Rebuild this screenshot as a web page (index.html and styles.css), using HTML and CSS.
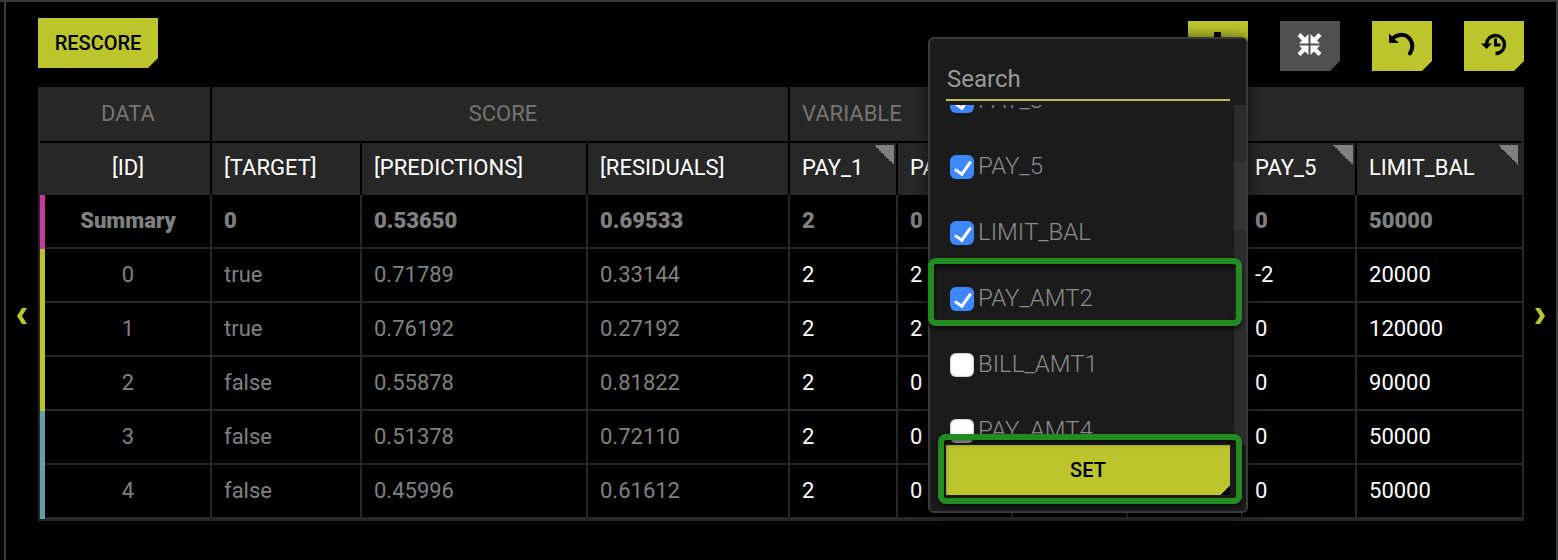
FILE: index.html
```html
<!DOCTYPE html>
<html lang="en">
<head>
<meta charset="utf-8">
<title>Rescore</title>
<link rel="stylesheet" href="styles.css">
</head>
<body>
<main class="panel">
  <header class="toolbar">
    <button class="btn btn-text" type="button">RESCORE</button>
    <div class="actions">
      <div class="picker">
        <button class="btn btn-icon" type="button" aria-label="Add variable">
          <svg width="28" height="28" viewBox="0 0 28 28"><path d="M10 0h7v10h9v7h-9v10h-7V17H1v-7h9z"/></svg>
        </button>
        <form class="popup">
          <input class="search" type="text" placeholder="Search" aria-label="Search">
          <div class="scroll">
            <ul class="options">
              <li><label class="option"><input type="checkbox" checked><span>PAY_3</span></label></li>
              <li><label class="option"><input type="checkbox" checked><span>PAY_5</span></label></li>
              <li><label class="option"><input type="checkbox" checked><span>LIMIT_BAL</span></label></li>
              <li><label class="option"><input type="checkbox" checked><span>PAY_AMT2</span></label></li>
              <li><label class="option"><input type="checkbox"><span>BILL_AMT1</span></label></li>
              <li><label class="option"><input type="checkbox"><span>PAY_AMT4</span></label></li>
            </ul>
            <div class="track"><div class="thumb"></div></div>
          </div>
          <button class="btn btn-set" type="button">SET</button>
          <div class="mark mark-option"></div>
          <div class="mark mark-set"></div>
        </form>
      </div>
      <button class="btn btn-icon btn-muted" type="button" aria-label="Collapse">
        <svg width="28" height="28" viewBox="0 0 28 28"><g fill="#fff"><path d="M12.500 11.500H3l3-3L1.500 4 4.500 1 9 5.500l3.500-3.500z"/><path d="M14.500 11.500H24l-3-3L25.500 4l-3-3L18 5.500 14.500 2z"/><path d="M12.500 13.500H3l3 3L1.500 21l3 3L9 19.500l3.500 3.500z"/><path d="M14.500 13.500H24l-3 3 4.500 4.500-3 3-4.500-4.500-3.500 3.500z"/></g></svg>
      </button>
      <button class="btn btn-icon" type="button" aria-label="Undo">
        <svg width="28" height="28" viewBox="0 0 28 28"><path d="M1 1.500V11h10L7.500 8z"/><path d="M5 6C11 1.500 18 2 21.500 6.500c3.500 4.500 3.500 10 .5 15" fill="none" stroke="#000" stroke-width="4" stroke-linecap="round"/></svg>
      </button>
      <button class="btn btn-icon" type="button" aria-label="History">
        <svg width="28" height="28" viewBox="0 0 28 28"><path d="M1 11.500h11L6.500 17z"/><path d="M6.500 12a9 9 0 1 1 9 9.500" fill="none" stroke="#000" stroke-width="3.400"/><path d="M14 6.500h3v5h3.500v3H14z"/></svg>
      </button>
    </div>
  </header>
  <button class="pager pager-prev" type="button" aria-label="Previous">
    <svg width="12" height="18" viewBox="0 0 12 18"><path d="M6 1h5L6 9l5 8H6L1 9z"/></svg>
  </button>
  <div class="table-wrap">
    <table class="grid">
      <colgroup><col class="c-id"><col class="c-target"><col class="c-pred"><col class="c-res"><col class="c-first"><col class="c-pay"><col class="c-pay"><col class="c-pay"><col class="c-last-pay"><col class="c-limit"></colgroup>
      <thead>
        <tr class="groups"><th class="mid">DATA</th><th class="mid" colspan="3">SCORE</th><th colspan="6">VARIABLE</th></tr>
        <tr class="names"><th class="mid">[ID]</th><th>[TARGET]</th><th>[PREDICTIONS]</th><th>[RESIDUALS]</th><th class="flag">PAY_1</th><th class="flag">PAY_2</th><th></th><th></th><th class="flag">PAY_5</th><th class="flag">LIMIT_BAL</th></tr>
      </thead>
      <tbody>
        <tr class="summary pink"><td>Summary</td><td>0</td><td>0.53650</td><td>0.69533</td><td>2</td><td>0</td><td></td><td></td><td>0</td><td>50000</td></tr>
        <tr class="lime"><td>0</td><td>true</td><td>0.71789</td><td>0.33144</td><td>2</td><td>2</td><td></td><td></td><td>-2</td><td>20000</td></tr>
        <tr class="lime"><td>1</td><td>true</td><td>0.76192</td><td>0.27192</td><td>2</td><td>2</td><td></td><td></td><td>0</td><td>120000</td></tr>
        <tr class="lime"><td>2</td><td>false</td><td>0.55878</td><td>0.81822</td><td>2</td><td>0</td><td></td><td></td><td>0</td><td>90000</td></tr>
        <tr class="teal"><td>3</td><td>false</td><td>0.51378</td><td>0.72110</td><td>2</td><td>0</td><td></td><td></td><td>0</td><td>50000</td></tr>
        <tr class="teal"><td>4</td><td>false</td><td>0.45996</td><td>0.61612</td><td>2</td><td>0</td><td></td><td></td><td>0</td><td>50000</td></tr>
      </tbody>
    </table>
  </div>
  <button class="pager pager-next" type="button" aria-label="Next">
    <svg width="12" height="18" viewBox="0 0 12 18"><path d="M6 1H1l5 8-5 8h5l5-8z"/></svg>
  </button>
</main>
</body>
</html>
```
FILE: styles.css
```css
* { box-sizing: border-box; }

body {
  margin: 0;
  background: #000;
  border-top: 2px solid #3a3a3a;
  color: #fff;
  font-family: Roboto, "Liberation Sans", sans-serif;
  font-size: 22px;
  line-height: 28px;
}

button, input { font: inherit; }

.panel {
  display: grid;
  grid-template-columns: 32px minmax(0, 1fr) 32px;
  grid-template-rows: auto 1fr;
  min-height: calc(100vh - 2px);
  margin-left: 4px;
  border: solid #3a3a3a;
  border-width: 0 2px;
}

.toolbar {
  grid-column: 2;
  grid-row: 1;
  display: flex;
  justify-content: space-between;
  align-items: flex-start;
  padding: 16px 0;
}

.actions {
  display: flex;
  gap: 32px;
  padding-top: 3px;
}

.btn {
  display: flex;
  align-items: center;
  justify-content: center;
  height: 50px;
  padding: 0;
  border: 0;
  background: #bcc52c;
  color: #000;
  font-weight: 500;
  cursor: pointer;
  clip-path: polygon(0 0, 100% 0, 100% calc(100% - 10px), calc(100% - 10px) 100%, 0 100%);
}

.btn-text { width: 120px; font-size: 20px; }
.btn-icon { width: 60px; }
.btn-muted { background: #505050; }

.picker { position: relative; }

.popup {
  position: absolute;
  z-index: 2;
  top: 16px;
  right: 0;
  width: 320px;
  padding: 16px 0 16px 16px;
  border: 2px solid #3a3a3a;
  border-radius: 6px;
  background: #1b1b1b;
  box-shadow: 0 0 14px rgba(0, 0, 0, 0.6);
}

.search {
  display: block;
  width: calc(100% - 16px);
  height: 46px;
  padding: 4px 0 0 1px;
  border: 0;
  border-bottom: 2px solid #bcbe58;
  outline: 0;
  background: transparent;
  color: #fff;
  font-size: 24px;
}

.search::placeholder { color: #9a9a9a; opacity: 1; }

.scroll {
  display: flex;
  justify-content: space-between;
  height: 340px;
  margin-top: 4px;
  overflow: hidden;
}

.options {
  margin: -37px 0 0;
  padding: 0 0 0 4px;
  list-style: none;
}

.option {
  display: flex;
  align-items: center;
  gap: 4px;
  height: 66px;
  color: #8c8c8c;
  font-size: 24px;
  font-weight: 300;
}

.option span { padding-bottom: 2px; }

.option input {
  appearance: none;
  width: 24px;
  height: 24px;
  margin: 0;
  border-radius: 6px;
  background: #fff;
  box-shadow: inset 0 0 2px #666;
}

.option input:checked {
  background: #3d87fa;
  box-shadow: none;
}

.option input:checked::before {
  content: "";
  display: block;
  width: 7px;
  height: 14px;
  margin: 3px 0 0 8px;
  border: solid #fff;
  border-width: 0 3px 3px 0;
  transform: rotate(35deg);
}

.track {
  width: 12px;
  padding-top: 58px;
  background: #2c2c2c;
}

.thumb { height: 66px; background: #343434; }

.btn-set {
  width: calc(100% - 16px);
  background: linear-gradient(135deg, #bcc52c calc(100% - 7px), #000 calc(100% - 7px));
  clip-path: none;
  font-size: 20px;
}

.mark {
  position: absolute;
  right: 4px;
  border: 6px solid #228b22;
  border-radius: 8px;
  box-shadow: 0 3px 5px rgba(0, 0, 0, 0.7), inset 0 3px 5px rgba(0, 0, 0, 0.7);
  pointer-events: none;
}

.mark-option { top: 219px; left: -2px; height: 68px; }
.mark-set { top: 395px; left: 8px; height: 70px; }

.pager {
  grid-row: 2;
  display: flex;
  align-items: center;
  justify-content: center;
  height: 60px;
  margin-top: 199px;
  padding: 0;
  border: 0;
  background: transparent;
  cursor: pointer;
}

.pager-prev { grid-column: 1; }
.pager-next { grid-column: 3; }
.pager path { fill: #bcc52c; }

.table-wrap {
  grid-column: 2;
  grid-row: 2;
  align-self: start;
  border: solid #272727;
  border-width: 0 2px 2px;
}

.grid {
  width: 100%;
  table-layout: fixed;
  border-collapse: separate;
  border-spacing: 0;
}

.c-id { width: 172px; }
.c-target { width: 150px; }
.c-pred { width: 226px; }
.c-res { width: 202px; }
.c-first { width: 108px; }
.c-pay { width: 115px; }
.c-last-pay { width: 114px; }
.c-limit { width: 165px; }

.grid th,
.grid td {
  height: 54px;
  padding: 0 0 2px 12px;
  text-align: left;
  font-weight: 400;
  white-space: nowrap;
}

.grid th {
  background-color: #272727;
  box-shadow: inset -2px 0 #000;
}

.grid .groups th {
  height: 56px;
  color: #757575;
  box-shadow: inset -2px -2px #000;
}

.grid .groups th:last-child { box-shadow: inset 0 -2px #000; }
.grid .names th { height: 52px; }
.grid .names th:last-child { box-shadow: none; }

.grid .mid,
.grid td:first-child {
  padding-left: 4px;
  text-align: center;
}

.grid .flag {
  background-image: linear-gradient(to bottom left, #808080 50%, transparent 50%);
  background-position: right 4px top 2px;
  background-size: 20px 20px;
  background-repeat: no-repeat;
}

.grid td { box-shadow: inset -2px -2px #272727; }
.grid td:last-child { box-shadow: inset 0 -2px #272727; }
.grid td:nth-child(-n+4) { color: #808080; }
.grid .summary td { color: #808080; font-weight: 900; }

.grid .pink td:first-child { box-shadow: inset 5px 0 #c43c98, inset -2px -2px #272727; }
.grid .lime td:first-child { box-shadow: inset 5px 0 #bcc52c, inset -2px -2px #272727; }
.grid .teal td:first-child { box-shadow: inset 5px 0 #64a0a8, inset -2px -2px #272727; }
```
